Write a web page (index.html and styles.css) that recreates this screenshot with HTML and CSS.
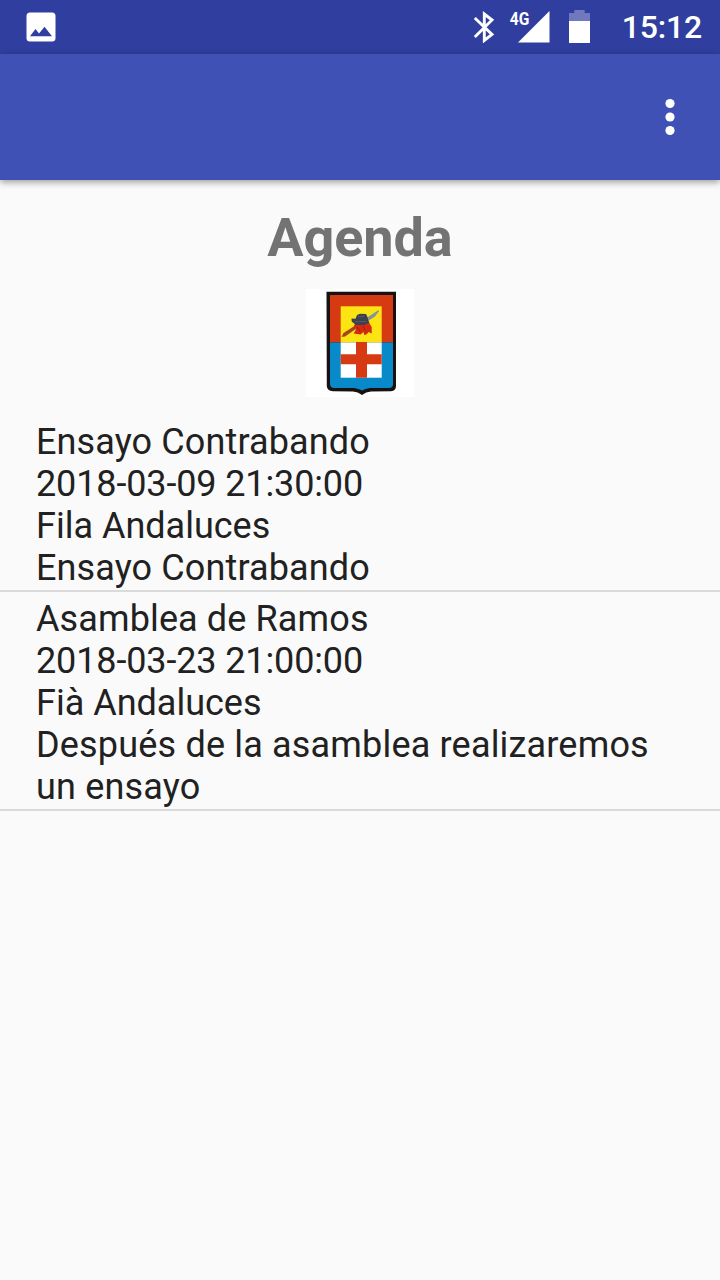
FILE: index.html
```
<!DOCTYPE html>
<html lang="es">
<head>
  <meta charset="UTF-8">
  <meta name="viewport" content="width=device-width, initial-scale=1.0">
  <title>Agenda</title>
  <link rel="stylesheet" href="styles.css">
</head>
<body>
  <div class="status-bar">
    <svg class="icon-picture" width="30" height="30" viewBox="0 0 30 30">
      <rect x="0.5" y="0.5" width="29" height="29" rx="3.5" fill="#fff"/>
      <path d="M4 24.3 L9.5 17 L13 21.5 L18.5 14.8 L26 24.3 Z" fill="#303f9f"/>
    </svg>
    <div class="status-icons">
      <svg class="icon-bluetooth" width="22" height="33" viewBox="0 0 22 33">
        <path d="M1.8 8 L19 24.5 L11.3 30.5 L11.3 4 L19 10 L1.8 27" fill="none" stroke="#fff" stroke-width="2.9"/>
      </svg>
      <svg class="icon-signal" width="41" height="43" viewBox="0 -5 41 43">
        <path d="M8 32.5 L39.5 1 L39.5 32.5 Z" fill="#fff"/>
        <text class="network" transform="translate(-0.3 15.3) scale(0.82 1)">4G</text>
      </svg>
      <svg class="icon-battery" width="21" height="33" viewBox="0 0 21 33">
        <path d="M0 3 H5.3 V0 H15.7 V3 H21 V11 H0 Z" fill="#7079bd"/>
        <rect x="0" y="11" width="21" height="22" fill="#fff"/>
      </svg>
    </div>
    <div class="clock">15:12</div>
  </div>

  <div class="toolbar">
    <svg class="icon-more" width="10" height="38" viewBox="0 0 10 38">
      <circle cx="5" cy="5.5" r="4.6" fill="#fff"/>
      <circle cx="5" cy="19" r="4.6" fill="#fff"/>
      <circle cx="5" cy="32.5" r="4.6" fill="#fff"/>
    </svg>
  </div>

  <div class="content">
    <h1 class="title">Agenda</h1>

    <svg class="shield" width="108" height="108" viewBox="0 0 108 108">
      <rect width="108" height="108" fill="#fff"/>
      <path d="M20.5 2.7 H90 V97 Q90 102 85 102.3 L65 102.6 Q60 103 56 106 Q52 103 47 102.6 L27 102.3 Q21 102 20.8 97 Z" fill="#17110f"/>
      <path d="M24 6 H87 V53.5 H24 Z" fill="#d63a13"/>
      <path d="M24 53.5 H87 V95 Q87 99 83 99 H64 Q59 99.5 56 101.5 Q53 99.5 48 99 H28.5 Q24 99 24 95 Z" fill="#0789ca"/>
      <rect x="34.7" y="17.3" width="41" height="36.2" fill="#fce412"/>
      <rect x="34.7" y="53.5" width="41" height="35.2" fill="#fff"/>
      <path d="M50 53 H61 V65.3 H75.7 V75.3 H61 V88.7 H50 V75.3 H34.7 V65.3 H50 Z" fill="#d63a13"/>
      <path d="M35.5 48 L37.5 44 L50 36 L52 38.5 L39 47.5 Z" fill="#a44522"/>
      <path d="M60.5 29 L72.5 21 L73 22.3 L69 27.5 L62 32 Z" fill="#8b9294"/>
      <path d="M50 33 L62 32 L65.7 38 L65.7 44.5 L62.5 43 L61 45 L58.5 46.3 L57.5 43 L54.5 45.5 L47.7 44.5 L50 40.5 L47.8 37 Z" fill="#d32a10"/>
      <path d="M51 38 L54 42 M57 37 L59 41" stroke="#8f2010" stroke-width="1" fill="none"/>
      <path d="M45.5 29.5 L49.5 29.8 L51 26 L54 24.8 L60 25 L61.5 28 L62.5 32 L63.5 33.5 L58 36 L50 36 L45.7 32.5 Z" fill="#3c414e"/>
      <path d="M52 28 L58 27.2 M49 32.7 L60 32.5" stroke="#565b69" stroke-width="1" fill="none"/>
    </svg>

    <div class="list">
      <div class="item">
        <div>Ensayo Contrabando</div>
        <div class="date">2018-03-09 21:30:00</div>
        <div class="place">Fila Andaluces</div>
        <div>Ensayo Contrabando</div>
      </div>
      <div class="item">
        <div>Asamblea de Ramos</div>
        <div class="date">2018-03-23 21:00:00</div>
        <div class="place">Fià Andaluces</div>
        <div class="description">Después de la asamblea realizaremos un ensayo</div>
      </div>
    </div>
  </div>
</body>
</html>
```
FILE: styles.css
```
* {
  box-sizing: border-box;
}

body {
  margin: 0;
  min-height: 100vh;
  background-color: #fafafa;
  font-family: Roboto, "Liberation Sans", sans-serif;
  color: #212121;
}

svg {
  display: block;
}

.status-bar {
  display: flex;
  align-items: center;
  height: 54px;
  padding: 0 18px 0 26px;
  background-color: #303f9f;
}

.status-icons {
  display: flex;
  align-items: center;
  margin-left: auto;
  padding-bottom: 1px;
}

.icon-bluetooth {
  margin-right: 15px;
}

.icon-signal {
  margin-right: 18px;
  overflow: visible;
}

.icon-battery {
  margin-right: 32px;
}

.network {
  font-size: 19px;
  font-weight: bold;
  fill: #fff;
}

.clock {
  font-size: 32px;
  font-weight: 500;
  line-height: 54px;
  letter-spacing: -0.2px;
  color: #fff;
}

.toolbar {
  display: flex;
  align-items: center;
  justify-content: flex-end;
  height: 126px;
  padding-right: 45px;
  background-color: #3f51b5;
  box-shadow: 0 2px 7px rgba(0, 0, 0, 0.4);
}

.content {
  display: flex;
  flex-direction: column;
  align-items: center;
  padding-top: 26px;
}

.title {
  margin: 0 0 19px;
  font-size: 54px;
  font-weight: bold;
  line-height: 64px;
  letter-spacing: -0.1px;
  color: #737373;
}

.list {
  width: 100%;
  margin-top: 18px;
}

.item {
  padding: 6px 36px 1px;
  font-size: 36px;
  line-height: 42px;
  letter-spacing: 0.12px;
  border-bottom: 2px solid #dadada;
}

.date {
  letter-spacing: -0.13px;
}

.place {
  letter-spacing: 0;
}

.description {
  letter-spacing: 0.18px;
}
```
